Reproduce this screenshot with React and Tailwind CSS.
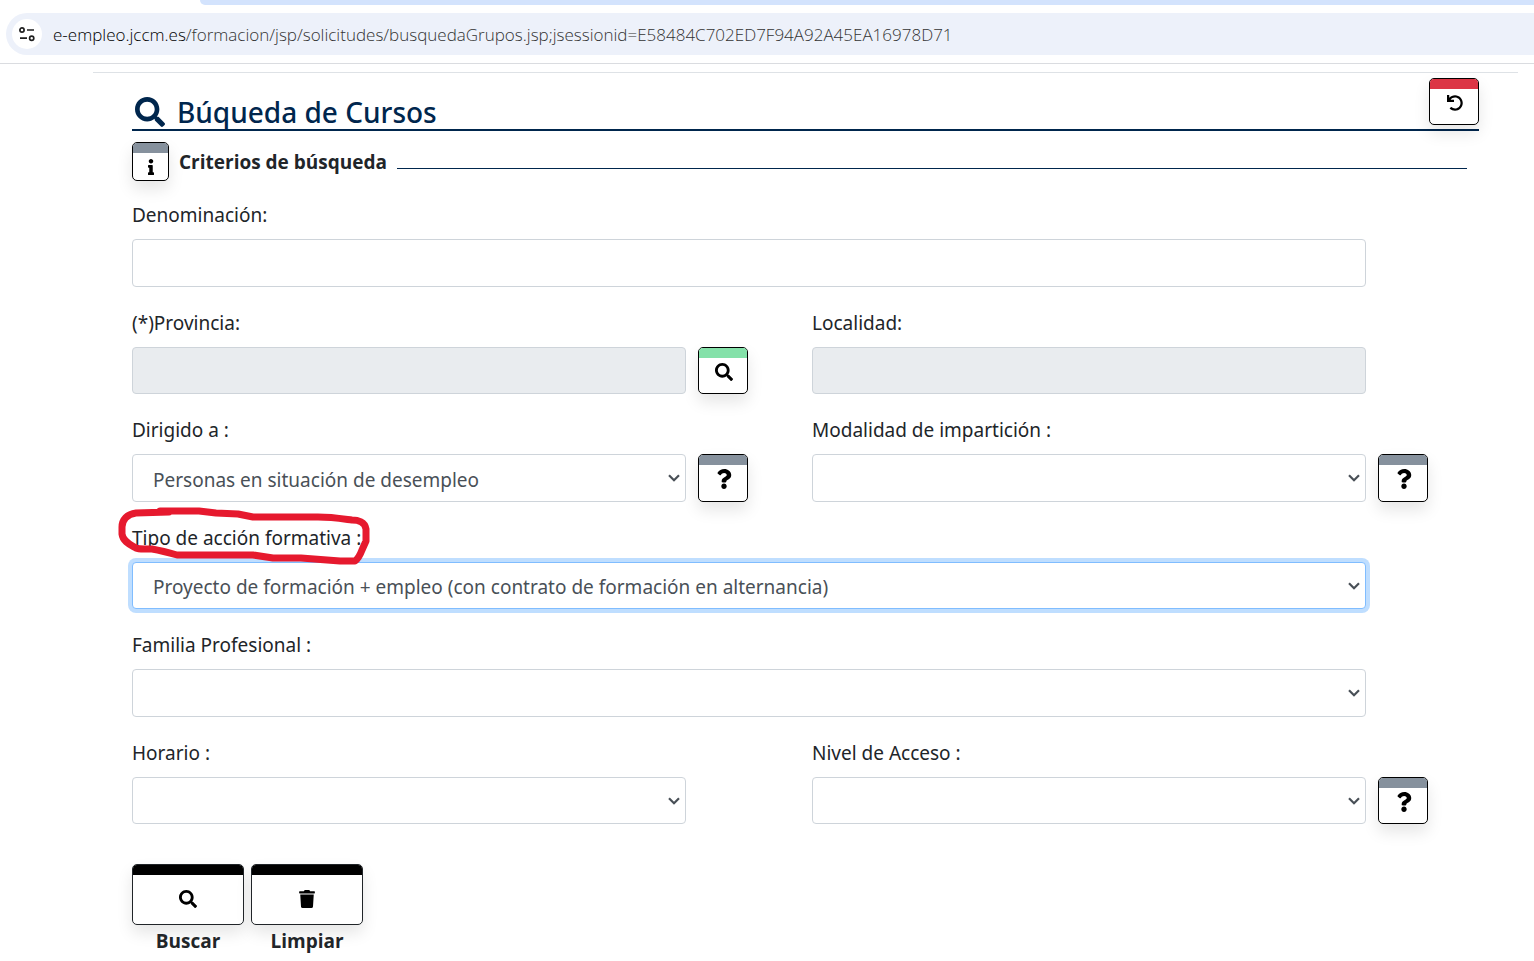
import React from "react";
import { FaSearch, FaInfo, FaQuestion, FaUndo, FaTrash } from "react-icons/fa";

const inputStyle = "block w-full min-w-0 rounded border outline-none text-[#495057]";

function App() {
  return (
    <div className="min-h-screen bg-white text-[19px] text-[#212529] font-['Noto_Sans','Open_Sans',sans-serif]">
      <AddressBar />

      <main className="ml-[93px] mr-4 mt-2 border-t border-[#dee2e6] pl-[39px] pr-[26px] pt-[5px]">
        {/* Title */}
        <header className="mr-[13px] flex h-[53px] items-start justify-between border-b-2 border-[#00264d]">
          <h1 className="flex items-center gap-3 pl-[3px] pt-[13px] text-[28px] leading-[42px] font-medium text-[#00264d]">
            <FaSearch className="size-[30px]" />
            Búqueda de Cursos
          </h1>
          <IconButton label="Volver" color="bg-[#dc3545]" height="h-[47px]">
            <FaUndo className="size-4" />
          </IconButton>
        </header>

        {/* Search criteria */}
        <div className="mr-[25px] mt-[11px] flex items-center">
          <button aria-label="Información" className="flex h-[39px] w-[37px] flex-col overflow-hidden rounded-[5px] border border-black bg-white shadow-[0_8px_16px_rgba(0,0,0,0.1)]">
            <span className="h-2.5 w-full shrink-0 bg-[#86919d]" />
            <span className="flex w-full flex-1 items-center justify-center">
              <FaInfo className="size-4 text-black" />
            </span>
          </button>
          <h2 className="ml-2.5 pt-0.5 font-['Open_Sans',sans-serif] font-bold">Criterios de búsqueda</h2>
          <div className="ml-2.5 mt-3.5 h-px flex-1 bg-[#00264d]" />
        </div>

        <form className="mt-[19px]">
          <div className="grid grid-cols-2 gap-y-[21px]">
            <Field id="denominacion" label="Denominación:" wide>
              <input id="denominacion" type="text" className={`${inputStyle} h-12 border-[#ced4da] px-5`} />
            </Field>

            <Field
              id="provincia"
              label="(*)Provincia:"
              button={
                <IconButton label="Buscar provincia" color="bg-[#84e1a9]" height="h-[47px]">
                  <FaSearch className="size-[18px]" />
                </IconButton>
              }
            >
              <input id="provincia" type="text" disabled className={`${inputStyle} h-[47px] border-[#ced4da] bg-[#e9ecef] px-5`} />
            </Field>
            <Field id="localidad" label="Localidad:">
              <input id="localidad" type="text" disabled className={`${inputStyle} h-[47px] border-[#ced4da] bg-[#e9ecef] px-5`} />
            </Field>

            <Field id="dirigido" label="Dirigido a :" button={<HelpButton height="h-12" />}>
              <Select id="dirigido" height="h-12" value="Personas en situación de desempleo" />
            </Field>
            <Field id="modalidad" label="Modalidad de impartición :" button={<HelpButton height="h-12" />}>
              <Select id="modalidad" height="h-12" />
            </Field>

            <Field id="tipo" label="Tipo de acción formativa :" wide marked>
              <Select
                id="tipo"
                height="h-[47px]"
                value="Proyecto de formación + empleo (con contrato de formación en alternancia)"
                active
              />
            </Field>

            <Field id="familia" label="Familia Profesional :" wide>
              <Select id="familia" height="h-12" />
            </Field>

            <Field id="horario" label="Horario :">
              <Select id="horario" height="h-[47px]" />
            </Field>
            <Field id="nivel" label="Nivel de Acceso :" button={<HelpButton height="h-[47px]" />}>
              <Select id="nivel" height="h-[47px]" />
            </Field>
          </div>

          {/* Actions */}
          <div className="mt-10 flex gap-[7px]">
            <ActionButton label="Buscar">
              <FaSearch className="size-[18px]" />
            </ActionButton>
            <ActionButton label="Limpiar">
              <FaTrash className="size-[18px]" />
            </ActionButton>
          </div>
        </form>
      </main>
    </div>
  );
}

export default App;

const AddressBar = () => {
  return (
    <div className="border-b border-[#dadce0] pb-2">
      <div className="ml-[200px] h-[5px] rounded-bl-xl bg-[#d3e3fd]" />
      <div className="ml-1.5 mt-2 flex h-[42px] items-center rounded-l-full bg-[#edf1fa] pl-1.5">
        <button aria-label="Información del sitio" className="flex size-[30px] items-center justify-center rounded-full bg-white">
          <svg viewBox="0 0 16 16" className="size-4" fill="none" stroke="#1f1f1f" strokeWidth="1.7">
            <circle cx="3" cy="4" r="2.1" />
            <path d="M8 4h7M1 12.2h7" />
            <circle cx="12.7" cy="12.2" r="2.1" />
          </svg>
        </button>
        <p className="ml-[11px] whitespace-nowrap pt-0.5 font-['Open_Sans',sans-serif] font-light text-[17px] text-[#333333]">
          <span className="text-black">e-empleo.jccm.es</span>
          /formacion/jsp/solicitudes/busquedaGrupos.jsp;jsessionid=E58484C702ED7F94A92A45EA16978D71
        </p>
      </div>
    </div>
  );
};

// Label + control, with an optional button at the right
const Field = ({ id, label, button, wide, marked, children }) => {
  return (
    <div className={wide ? "col-span-2" : ""}>
      <div className="relative mb-[9px] w-fit">
        <label htmlFor={id} className="block leading-[30px]">{label}</label>
        {marked && <Scribble />}
      </div>
      <div className={`flex gap-3 ${button ? "pr-16" : "pr-[126px]"}`}>
        <div className="min-w-0 flex-1">{children}</div>
        {button}
      </div>
    </div>
  );
};

const Select = ({ id, height, value = "", active }) => {
  return (
    <div className="relative">
      <select
        id={id}
        defaultValue={value}
        className={`${inputStyle} ${height} appearance-none bg-white pl-5 pr-8 pt-1 ${active ? "border-[#80bdff] ring-4 ring-[#bfdeff]" : "border-[#ced4da]"}`}
      >
        <option value={value}>{value}</option>
      </select>
      <svg
        viewBox="0 0 12 8"
        className="pointer-events-none absolute right-1.5 top-1/2 h-2 w-3 -translate-y-1/2"
        fill="none"
        stroke="#495057"
        strokeWidth="2.2"
      >
        <path d="M1 1.2l5 5 5-5" />
      </svg>
    </div>
  );
};

const IconButton = ({ label, color, height, children }) => {
  return (
    <button
      type="button"
      aria-label={label}
      className={`${height} flex w-[50px] shrink-0 flex-col overflow-hidden rounded-[5px] border border-black bg-white text-black shadow-[0_8px_16px_rgba(0,0,0,0.1)]`}
    >
      <span className={`${color} h-2.5 w-full shrink-0`} />
      <span className="flex w-full flex-1 items-center justify-center pb-2 pl-0.5">{children}</span>
    </button>
  );
};

const HelpButton = ({ height }) => (
  <IconButton label="Ayuda" color="bg-[#86919d]" height={height}>
    <FaQuestion className="size-5" />
  </IconButton>
);

const ActionButton = ({ label, children }) => {
  return (
    <button type="button" className="w-28 text-center font-['Open_Sans',sans-serif] font-bold">
      <span className="flex h-[61px] flex-col overflow-hidden rounded-[5px] border border-[#212529] bg-white text-black shadow-[0_8px_16px_rgba(0,0,0,0.1)]">
        <span className="h-2.5 shrink-0 bg-black" />
        <span className="flex flex-1 items-center justify-center pb-0.5">{children}</span>
      </span>
      <span className="mt-0.5 block leading-7">{label}</span>
    </button>
  );
};

// Red pen mark around a label
const Scribble = () => (
  <svg
    viewBox="0 0 252 58"
    className="pointer-events-none absolute -left-3.5 -top-4 z-10 h-[58px] w-[252px]"
    fill="none"
    stroke="#e6192e"
    strokeWidth="7"
    strokeLinecap="round"
    strokeLinejoin="round"
  >
    <path d="M51 5 L18 6 C9 7 4 13 4 20 V27 C5 35 13 38 18 41 Q20 42 26 42 L34 42 Q45 44 59 48 L135 48 L155 51 L183 51 L222 54 H237 Q241 51 244 43 L248 34 V22 C247 15 240 13 234 13 C226 12 214 10 200 10 H135 L120 7 L98 6 L81 4 L42 4" />
  </svg>
);
